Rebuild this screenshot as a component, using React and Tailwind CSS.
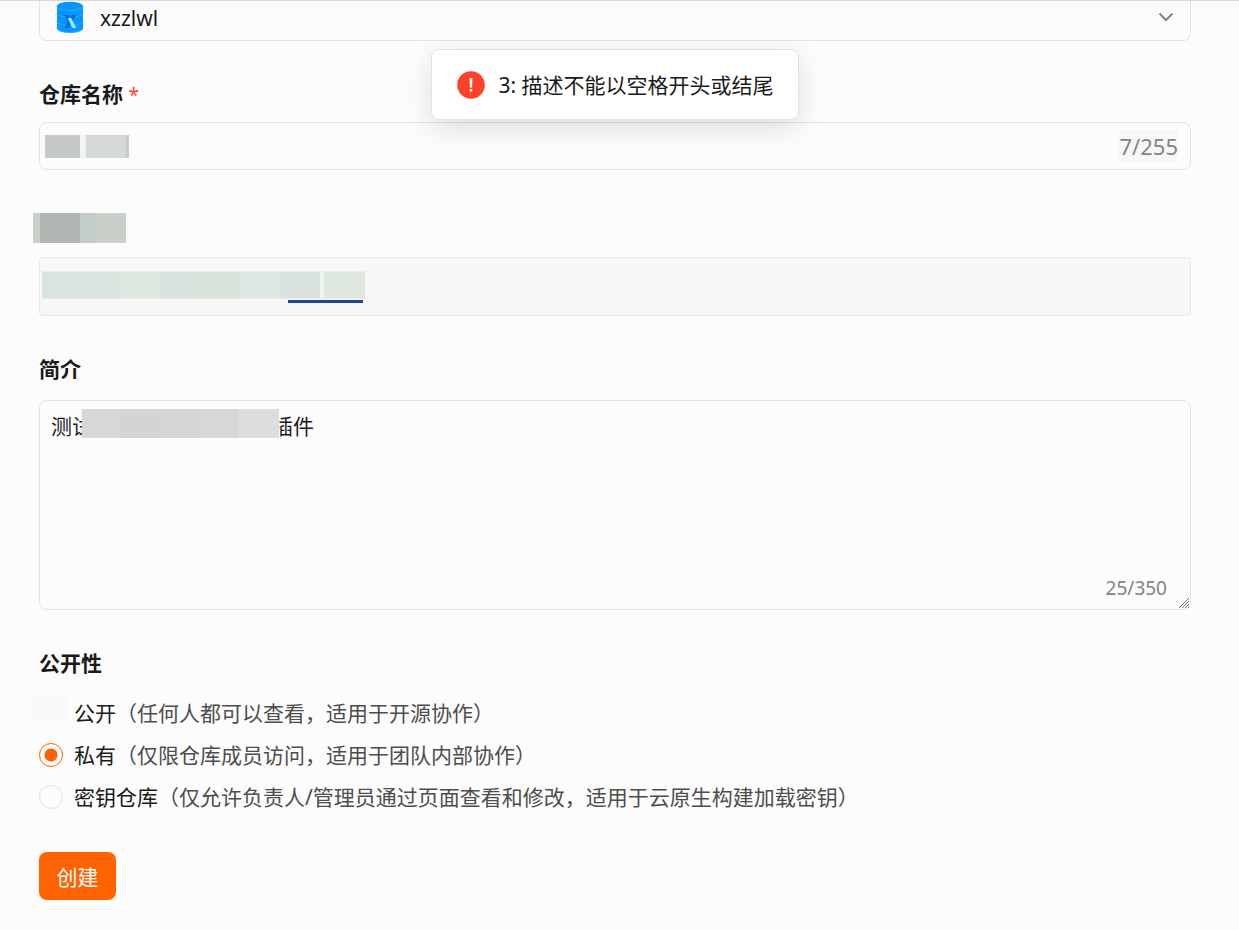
import { useState } from 'react';

function Label({ htmlFor, children }) {
  return (
    <label htmlFor={htmlFor} className="block h-7 text-[21px] leading-7 font-bold text-[#1a1a1a]">
      {children}
    </label>
  );
}

function DatabaseLogo() {
  return (
    <svg viewBox="0 0 28 32" className="h-8 w-7 shrink-0" aria-hidden="true">
      <path d="M1 5v22c0 2.600 5.800 4.600 13 4.600s13-2 13-4.600V5z" fill="#0a94ff" />
      <ellipse cx="14" cy="5" rx="13" ry="4.300" fill="#0a94ff" />
      <path d="M1 5c0 2.600 5.800 4.600 13 4.600S27 7.600 27 5M1 12c0 2.600 5.800 4.400 13 4.400s13-1.800 13-4.400M1 20c0 2.600 5.800 4.400 13 4.400s13-1.800 13-4.400" fill="none" stroke="#12b4ff" strokeWidth="1" />
      <path d="M1 27c0 2.600 5.800 4.500 13 4.500s13-1.900 13-4.500" fill="none" stroke="#12b4ff" strokeWidth="1" />
      <path d="M15.800 14h4.400L12.800 27H8.300z" fill="#1266e0" />
      <path d="M8.300 14h4l2.200 4-2.200 4z" fill="#1266e0" />
      <path d="M11.800 17h3.400l5.200 10h-4z" fill="#8bf0ff" />
    </svg>
  );
}

function Toast() {
  return (
    <div
      role="alert"
      className="absolute top-12 left-1/2 z-10 flex h-[71px] -translate-x-[189px] items-center gap-[13px] rounded-lg border border-[#e2e2e2] bg-white px-6 text-[21px] leading-8 whitespace-nowrap text-[#1a1a1a] shadow-[0_8px_28px_rgba(0,0,0,0.12)]"
    >
      <svg viewBox="0 0 30 30" className="size-[30px]" aria-hidden="true">
        <circle cx="15" cy="15" r="13.800" fill="#ff402b" />
        <path d="M13.600 8h2.800l-.3 9.500h-2.200z" fill="#fff" />
        <rect x="13.700" y="19" width="2.600" height="2.600" fill="#fff" />
      </svg>
      <span>3: 描述不能以空格开头或结尾</span>
    </div>
  );
}

const options = [
  { id: 'public', name: '公开', note: '（任何人都可以查看，适用于开源协作）', masked: true },
  { id: 'private', name: '私有', note: '（仅限仓库成员访问，适用于团队内部协作）' },
  { id: 'secret', name: '密钥仓库', note: '（仅允许负责人/管理员通过页面查看和修改，适用于云原生构建加载密钥）' },
];

export default function App() {
  const [name, setName] = useState('');
  const [intro, setIntro] = useState('测试\u3000\u3000\u3000\u3000\u3000\u3000\u3000\u3000\u00a0\u00a0插件');
  const [visibility, setVisibility] = useState('private');

  return (
    <div className="relative min-h-screen border-t border-[#d9d9d9] bg-[#fcfcfc] font-['Noto_Sans','Noto_Sans_CJK_SC',sans-serif] text-[21px] text-[#1a1a1a]">
      <Toast />
      <form className="pr-12 pb-7 pl-[39px]" onSubmit={(e) => e.preventDefault()}>
        <div className="relative flex h-10 items-start rounded-b-lg border border-t-0 border-[#e2e2e2] pl-4">
          <DatabaseLogo />
          <select
            aria-label="所属组织"
            className="h-[34px] flex-1 appearance-none bg-transparent pl-4 text-[21px] leading-8 outline-none"
          >
            <option>xzzlwl</option>
          </select>
          <svg viewBox="0 0 16 10" className="pointer-events-none absolute top-[11px] right-4 h-[10px] w-4" aria-hidden="true">
            <path d="M1.500 1.500L8 8l6.500-6.500" fill="none" stroke="#858585" strokeWidth="2" />
          </svg>
        </div>

        <div className="mt-[39px]">
          <Label htmlFor="repo-name">
            仓库名称 <span className="text-[19px] font-normal text-[#ff402b]">*</span>
          </Label>
          <div className="relative mt-[14px] flex h-12 items-center rounded-lg border border-[#e2e2e2] pr-3">
            <input
              id="repo-name"
              type="text"
              value={name}
              onChange={(e) => setName(e.target.value)}
              className="h-full min-w-0 flex-1 bg-transparent px-3 outline-none"
            />
            <span className="bg-[#f7f7f7] text-[22px] leading-8 text-[#858585]">7/255</span>
            <span className="pointer-events-none absolute top-3 left-[5px] flex h-[23px] w-[84px]" aria-hidden="true">
              <span className="w-[35px] bg-[#c5cac6]" />
              <span className="w-[6px] bg-[#f1f5f2]" />
              <span className="w-10 bg-[#d4d9d5]" />
              <span className="w-[3px] bg-[#c7ccc8]" />
            </span>
          </div>
        </div>

        <div className="mt-[43px]">
          <div className="-ml-[6px] flex h-[30px]" aria-hidden="true">
            <span className="w-[7px] bg-[#c9d0c9]" />
            <span className="w-10 bg-[#b0b7b3]" />
            <span className="w-[15px] bg-[#c4ccc9]" />
            <span className="w-[31px] bg-[#c9d0c9]" />
          </div>
          <div className="mt-[14px] h-[59px] rounded border border-[#e8e8e8] bg-[#f7f7f7] pt-[13px] pl-[2px]" aria-hidden="true">
            <div className="flex h-7 w-[323px] border-y border-[#e8eeea]">
              <span className="w-[38px] bg-[#d9e4df]" />
              <span className="w-10 bg-[#dae4de]" />
              <span className="w-10 bg-[#dee8e0]" />
              <span className="w-10 bg-[#d9e3de]" />
              <span className="w-10 bg-[#d9e3da]" />
              <span className="w-10 bg-[#dde6e1]" />
              <span className="w-10 bg-[#d9e2de]" />
              <span className="w-[30px] max-w-1 bg-[#edf5f1]" />
              <span className="flex-1 bg-[#dfe8e0]" />
            </div>
            <div className="mt-px ml-[246px] h-[3px] w-[75px] bg-[#2045a0]" />
          </div>
        </div>

        <div className="mt-[39px]">
          <Label htmlFor="intro">简介</Label>
          <div className="relative mt-[17px]">
            <textarea
              id="intro"
              value={intro}
              onChange={(e) => setIntro(e.target.value)}
              className="block h-[210px] w-full resize-y rounded-lg border border-[#e2e2e2] bg-transparent px-[11px] py-[9px] leading-8 outline-none [&::-webkit-resizer]:bg-transparent"
            />
            <svg viewBox="0 0 12 12" className="pointer-events-none absolute right-px bottom-px size-3" aria-hidden="true">
              <path d="M1 11L11 1M4 11l7-7M7 11l4-4M10 11l1-1" stroke="#707070" strokeWidth="1" />
            </svg>
            <span className="pointer-events-none absolute top-[9px] left-[43px] flex h-[29px] w-[197px]" aria-hidden="true">
              <span className="w-[38px] bg-[#d7d7d7]" />
              <span className="w-10 bg-[#d4d4d4]" />
              <span className="w-[38px] bg-[#d6d6d6]" />
              <span className="w-10 bg-[#d7d7d7]" />
              <span className="w-[41px] bg-[#dddddd]" />
            </span>
            <span className="pointer-events-none absolute right-6 bottom-2 text-[19px] leading-7 text-[#858585]">25/350</span>
          </div>
        </div>

        <fieldset className="mt-[39px]">
          <legend className="h-7 text-[21px] leading-7 font-bold">公开性</legend>
          <div className="mt-[15px]">
            {options.map((o) => (
              <label key={o.id} className="relative flex h-[42px] items-center gap-[11px]">
                <input
                  type="radio"
                  name="visibility"
                  value={o.id}
                  checked={visibility === o.id}
                  onChange={() => setVisibility(o.id)}
                  className="size-6 shrink-0 appearance-none rounded-full border border-[#e2e2e2] bg-[#fcfcfc] checked:border-[#ff6200] checked:bg-[radial-gradient(circle,#ff6200_0,#ff6200_6px,transparent_7px)]"
                />
                <span className="pt-[2px] whitespace-nowrap">
                  {o.name}
                  <span className="text-[#4d4d4d]">{o.note}</span>
                </span>
                {o.masked && (
                  <span className="absolute top-[3px] -left-[7px] h-8 w-[37px] bg-[#fafafa]" aria-hidden="true" />
                )}
              </label>
            ))}
          </div>
        </fieldset>

        <button
          type="submit"
          className="mt-[34px] h-12 min-w-[77px] rounded-lg bg-[#ff6200] px-4 pt-[2px] text-[21px] leading-8 text-white"
        >
          创建
        </button>
      </form>
    </div>
  );
}
